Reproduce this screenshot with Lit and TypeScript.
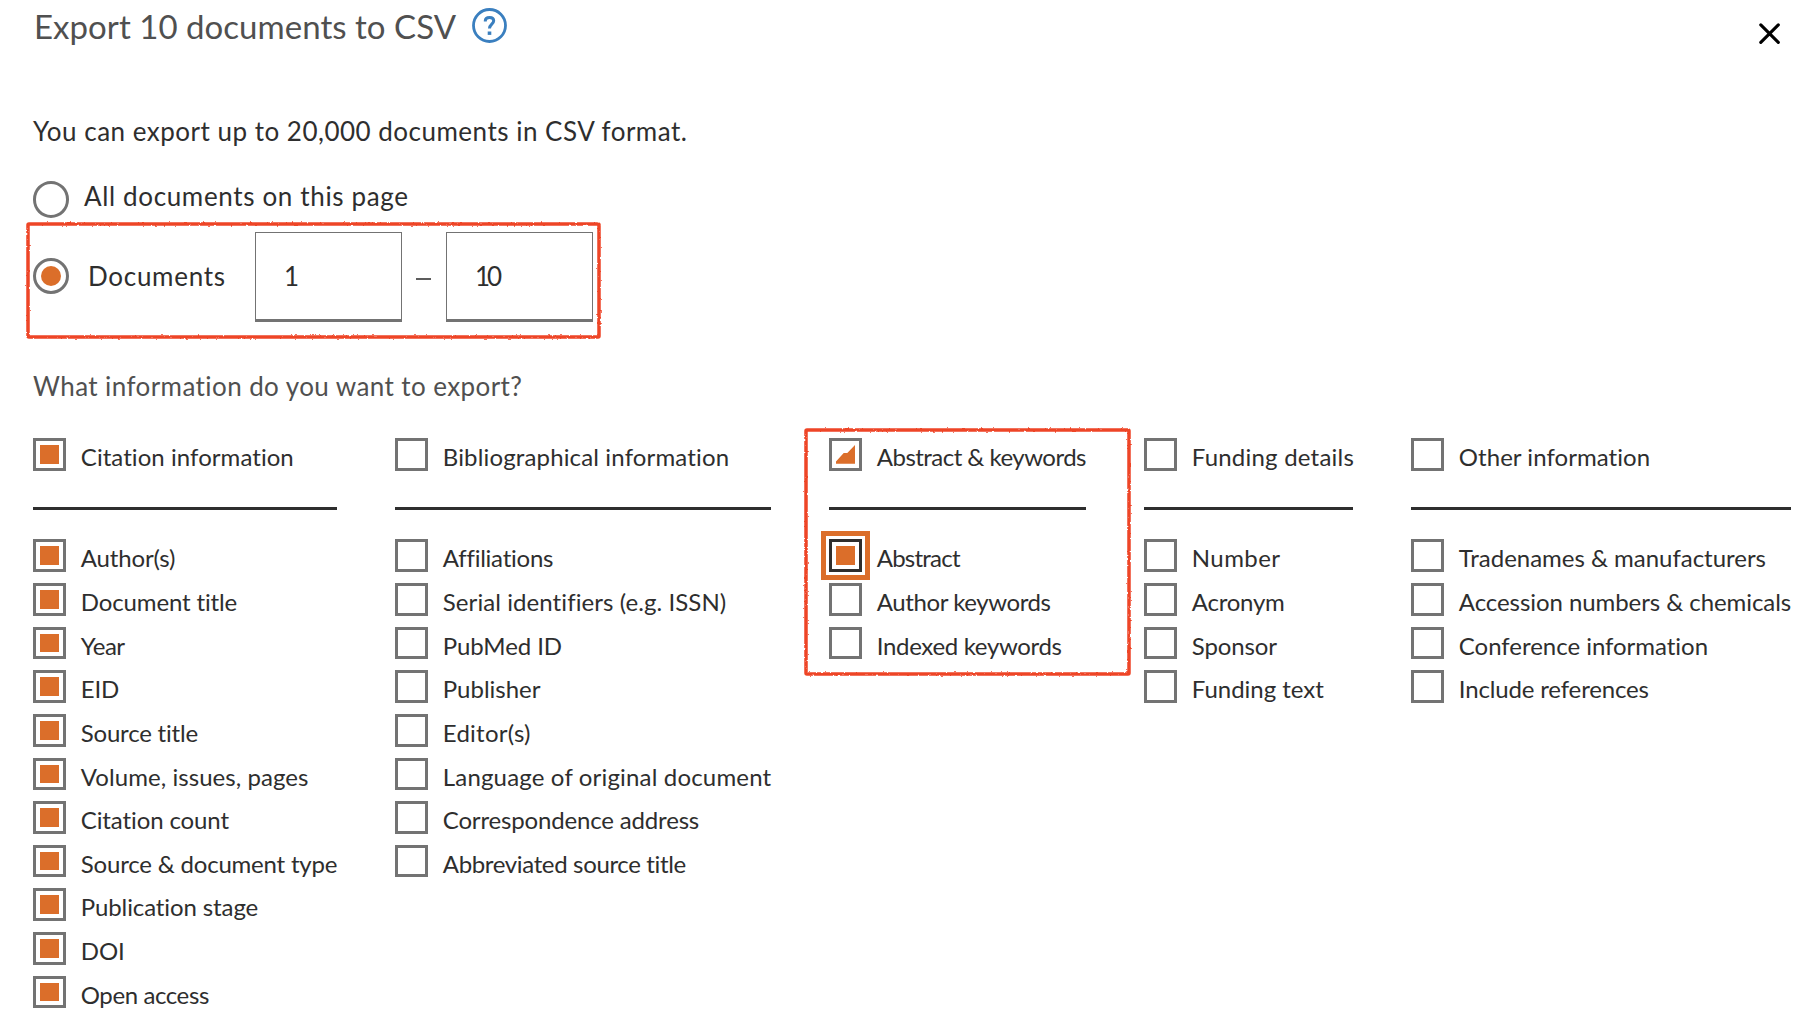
import { LitElement, html, css, svg, nothing } from "lit";
import { customElement, property } from "lit/decorators.js";

type BoxState = "off" | "on" | "partial";

interface Item {
  text: string;
  /** Drawn width of the label, in pixels. */
  w: number;
  state?: BoxState;
  focused?: boolean;
}

interface Group {
  head: Item;
  items: Item[];
}

const on = (text: string, w: number): Item => ({ text, w, state: "on" });
const off = (text: string, w: number): Item => ({ text, w, state: "off" });

const GROUPS: Group[] = [
  {
    head: on("Citation information", 213),
    items: [
      on("Author(s)", 94.7),
      on("Document title", 156.5),
      on("Year", 44.3),
      on("EID", 38.5),
      on("Source title", 117.3),
      on("Volume, issues, pages", 227.7),
      on("Citation count", 148.3),
      on("Source & document type", 256.7),
      on("Publication stage", 177.5),
      on("DOI", 44),
      on("Open access", 128.5),
    ],
  },
  {
    head: off("Bibliographical information", 286.3),
    items: [
      off("Affiliations", 110.7),
      off("Serial identifiers (e.g. ISSN)", 283.5),
      off("PubMed ID", 119.3),
      off("Publisher", 97.7),
      off("Editor(s)", 87.7),
      off("Language of original document", 328.4),
      off("Correspondence address", 256.5),
      off("Abbreviated source title", 243.5),
    ],
  },
  {
    head: { text: "Abstract & keywords", w: 209.7, state: "partial" },
    items: [
      { text: "Abstract", w: 83.7, state: "on", focused: true },
      off("Author keywords", 174.2),
      off("Indexed keywords", 185.2),
    ],
  },
  {
    head: off("Funding details", 162),
    items: [
      off("Number", 88.2),
      off("Acronym", 93),
      off("Sponsor", 85.2),
      off("Funding text", 132),
    ],
  },
  {
    head: off("Other information", 191.4),
    items: [
      off("Tradenames & manufacturers", 307.2),
      off("Accession numbers & chemicals", 332.4),
      off("Conference information", 249.3),
      off("Include references", 190.2),
    ],
  },
];

/** One line of text, tracked so that it spans the given width. */
@customElement("fit-text")
class FitText extends LitElement {
  static styles = css`
    :host {
      display: block;
      white-space: nowrap;
    }
    .run {
      display: inline-block;
    }
  `;

  @property() text = "";
  @property({ type: Number }) width = 0;

  render() {
    return html`<span class="run">${this.text}</span>`;
  }

  updated() {
    const run = this.renderRoot.querySelector<HTMLElement>(".run");
    if (!run || !this.width || this.text.length < 2) return;
    run.style.letterSpacing = "0.001px";
    const natural = run.getBoundingClientRect().width;
    run.style.letterSpacing = `${(this.width - natural) / (this.text.length - 1)}px`;
  }
}

@customElement("check-box")
class CheckBox extends LitElement {
  static styles = css`
    :host {
      display: flex;
      align-items: flex-start;
      height: 32.7px;
      font-size: 24px;
      line-height: 30px;
      color: #2e2e2e;
    }
    .box {
      box-sizing: border-box;
      flex: none;
      width: 33px;
      height: 32.7px;
      padding: 4px;
      border: 3px solid #737373;
      background: #fff;
    }
    .box.focused {
      height: 33px;
      border-color: #2e2e2e;
      outline: 5px solid #db6e2a;
      outline-offset: 3px;
    }
    .fill {
      height: 100%;
      background: #db6e2a;
    }
    .fill.partial {
      clip-path: polygon(0 16.5px, 7.7px 8px, 11.3px 8px, 19px 0, 19px 100%, 0 100%);
    }
    .label {
      margin: 4.1px 0 0 14.8px;
    }
  `;

  @property({ attribute: false }) item!: Item;

  render() {
    const { text, w, state, focused } = this.item;
    return html`
      <div class="box ${focused ? "focused" : ""}">
        ${state === "off" ? nothing : html`<div class="fill ${state}"></div>`}
      </div>
      <fit-text class="label" .text=${text} .width=${w}></fit-text>
    `;
  }
}

/** A marker-pen rectangle laid over the form. */
const marker = (w: number, h: number, name: string) => html`
  <svg class="marker ${name}" width=${w + 12} height=${h + 12} viewBox="-6 -6 ${w + 12} ${h + 12}">
    ${svg`
      <filter id="rough-${name}" filterUnits="userSpaceOnUse" x="-6" y="-6" width=${w + 12} height=${h + 12}>
        <feTurbulence type="fractalNoise" baseFrequency="0.35" numOctaves="2" seed="4" result="n"></feTurbulence>
        <feDisplacementMap in="SourceGraphic" in2="n" scale="2.4" xChannelSelector="R" yChannelSelector="G"></feDisplacementMap>
      </filter>
      <rect x="2" y="2" width=${w - 4} height=${h - 4} rx="1" fill="none" stroke="#ee4526" stroke-width="3.5" filter="url(#rough-${name})"></rect>
    `}
  </svg>
`;

@customElement("app-root")
class AppRoot extends LitElement {
  static styles = css`
    :host {
      display: block;
      position: relative;
      box-sizing: border-box;
      width: 1810px;
      height: 1014px;
      padding-left: 33px;
      overflow: hidden;
      background: #fff;
      color: #2e2e2e;
      font-family: Lato, "Open Sans", sans-serif;
      font-size: 26px;
      line-height: 30px;
    }
    .header {
      display: flex;
      height: 52px;
      align-items: flex-start;
    }
    .title {
      box-sizing: border-box;
      padding-left: 1px;
      color: #505050;
      font-size: 33px;
      line-height: 52px;
      width: 439px;
    }
    .help {
      margin-top: 8px;
    }
    .close {
      margin: 22px 29px 0 auto;
    }
    .intro {
      margin-top: 64px;
    }
    .row {
      display: flex;
      align-items: flex-start;
    }
    .all {
      margin-top: 35px;
      height: 37px;
    }
    .range {
      margin-top: 14px;
      height: 90px;
    }
    .radio {
      box-sizing: border-box;
      flex: none;
      width: 36px;
      height: 36.5px;
      padding: 5px;
      border: 3px solid #737373;
      border-radius: 50%;
    }
    .range .radio {
      height: 36px;
      margin-top: 26px;
    }
    .dot {
      width: 20px;
      height: 20px;
      border-radius: 50%;
      background: #db6e2a;
    }
    .all .name {
      margin-left: 15px;
    }
    .range .name {
      margin: 29px 0 0 19px;
      width: 167px;
    }
    .field {
      box-sizing: border-box;
      width: 147px;
      height: 90px;
      padding: 28px 0 0 28px;
      border: 1px solid #737373;
      border-bottom-width: 3px;
    }
    .dash {
      width: 15px;
      height: 2px;
      margin: 46px 15px 0 14px;
      background: #5c5c5c;
    }
    .question {
      margin-top: 49px;
      color: #505050;
    }
    .groups {
      display: grid;
      grid-template-columns: 304px 376px 257px 209px 380px;
      column-gap: 58px;
      margin-top: 37px;
    }
    .head {
      height: 33px;
      padding-bottom: 36px;
      border-bottom: 3px solid #2e2e2e;
    }
    .list {
      display: grid;
      grid-auto-rows: 43.63px;
      margin-top: 29.4px;
    }
    .marker {
      position: absolute;
      pointer-events: none;
    }
    .documents {
      left: 19.5px;
      top: 215.5px;
    }
    .keywords {
      left: 797.5px;
      top: 422px;
    }
  `;

  render() {
    return html`
      <div class="header">
        <fit-text class="title" text="Export 10 documents to CSV" width="422"></fit-text>
        <svg class="help" width="35" height="35" viewBox="0 0 35 35" fill="none" stroke="#3a7fbf">
          <circle cx="17.5" cy="17.5" r="16" stroke-width="2.8"></circle>
          <path d="M13.3 13.4V12.7C13.3 10.5 15 9.5 17.6 9.5C20.2 9.5 21.7 10.7 21.7 12.8C21.7 16.2 17.5 16.3 17.5 20.6" stroke-width="3"></path>
          <path d="M15.7 25.2H19.3" stroke-width="3.4"></path>
        </svg>
        <svg class="close" width="23" height="23" viewBox="0 0 23 23" stroke="#000" stroke-width="3.1" stroke-linecap="round">
          <path d="M2.8 2.9L20.3 20.4M20.3 2.9L2.8 20.4"></path>
        </svg>
      </div>

      <fit-text class="intro" text="You can export up to 20,000 documents in CSV format." width="654"></fit-text>

      <div class="row all">
        <div class="radio"></div>
        <fit-text class="name" text="All documents on this page" width="324"></fit-text>
      </div>
      <div class="row range">
        <div class="radio"><div class="dot"></div></div>
        <fit-text class="name" text="Documents" width="137"></fit-text>
        <div class="field">1</div>
        <div class="dash"></div>
        <div class="field"><fit-text text="10" width="27"></fit-text></div>
      </div>

      <fit-text class="question" text="What information do you want to export?" width="489"></fit-text>

      <div class="groups">
        ${GROUPS.map(
          (g) => html`
            <div>
              <div class="head"><check-box .item=${g.head}></check-box></div>
              <div class="list">${g.items.map((i) => html`<check-box .item=${i}></check-box>`)}</div>
            </div>
          `
        )}
      </div>

      ${marker(575, 117, "documents")} ${marker(327, 248, "keywords")}
    `;
  }
}
